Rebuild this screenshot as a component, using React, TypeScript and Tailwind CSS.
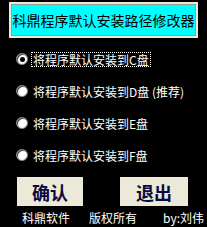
const options = [
  { label: "将程序默认安装到C盘", checked: true },
  { label: "将程序默认安装到D盘 (推荐)", checked: false },
  { label: "将程序默认安装到E盘", checked: false },
  { label: "将程序默认安装到F盘", checked: false },
];

const font = "font-['SimSun','Noto_Sans_CJK_SC',sans-serif]";

function Radio({ checked }: { checked: boolean }) {
  return (
    <span className="flex h-[12px] w-[12px] items-center justify-center rounded-full border border-[#808080] bg-white shadow-[inset_1px_1px_0_#404040]">
      {checked && <span className="h-[5px] w-[5px] rounded-full bg-black" />}
    </span>
  );
}

export default function App() {
  return (
    <div className={`flex h-[227px] w-[207px] flex-col bg-black ${font}`}>
      <div className="mx-[9px] mt-[2px] h-[36px] border-2 border-[#ece9d8]">
        <div className="flex h-full items-center justify-center border border-[#9a9a9a] bg-[#00ffff] text-[14px] leading-none text-black">
          科鼎程序默认安装路径修改器
        </div>
      </div>

      <div className="mt-[5px] flex flex-col">
        {options.map((o) => (
          <div key={o.label} className="flex h-[32px] items-center pl-[16px]">
            <Radio checked={o.checked} />
            <span
              className={
                "ml-[4px] px-[1px] text-[12px] leading-[13px] text-white " +
                (o.checked ? "outline outline-1 outline-dotted outline-white" : "")
              }
            >
              {o.label}
            </span>
          </div>
        ))}
      </div>

      <div className="mt-[6px] flex">
        <button className="ml-[17px] h-[29px] w-[66px] bg-[#ece9d8] text-[18px] font-bold leading-none text-[#0a0a40]">
          确认
        </button>
        <button className="ml-[37px] h-[29px] w-[68px] bg-[#ece9d8] text-[18px] font-bold leading-none text-[#0a0a40]">
          退出
        </button>
      </div>

      <div className="mt-[5px] flex h-[14px] items-center text-[12px] leading-none text-white">
        <span className="ml-[22px]">科鼎软件</span>
        <span className="ml-[19px]">版权所有</span>
        <span className="ml-[26px]">by:刘伟</span>
      </div>
    </div>
  );
}
